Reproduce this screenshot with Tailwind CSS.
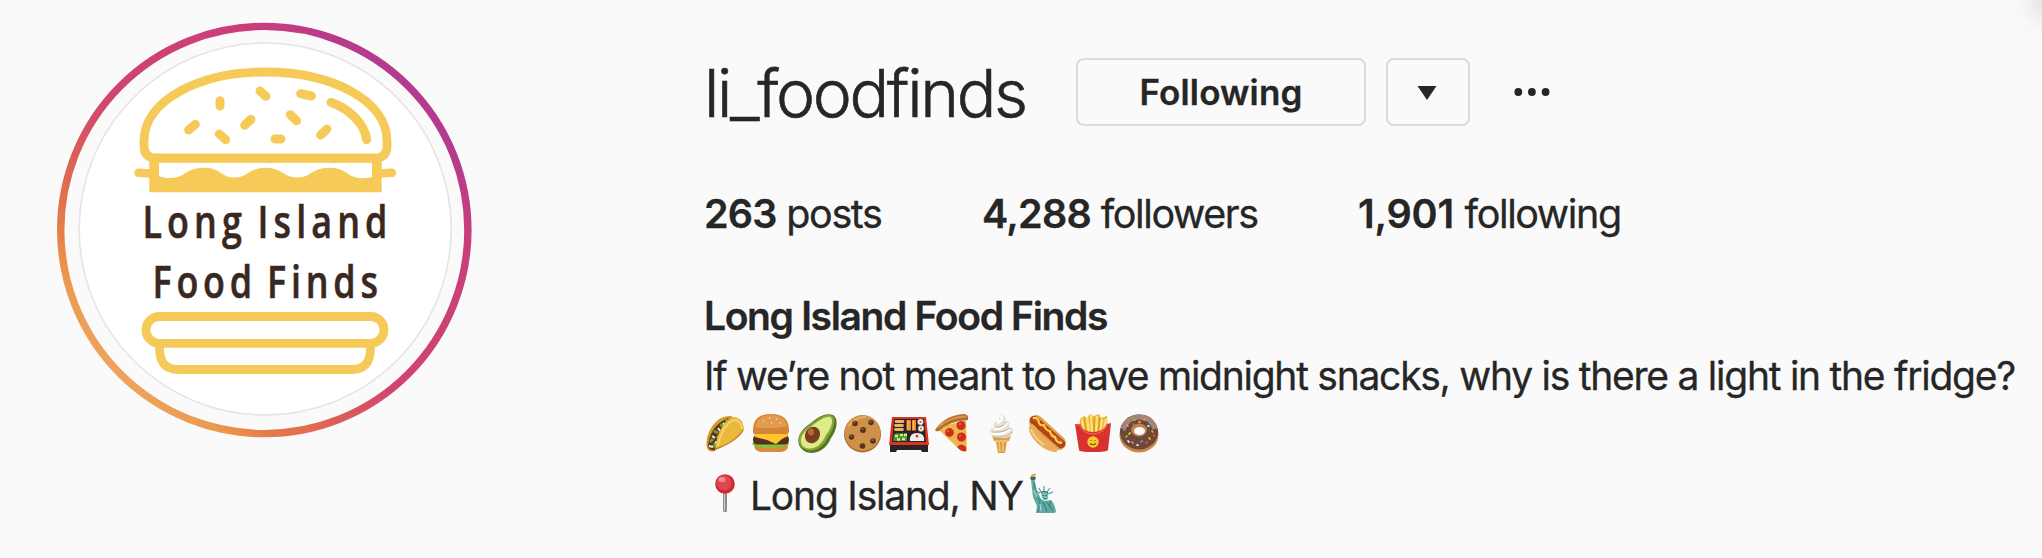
<!DOCTYPE html>
<html lang="en">
<head>
<meta charset="utf-8">
<title>li_foodfinds</title>
<script src="https://cdn.jsdelivr.net/npm/@tailwindcss/browser@4"></script>
</head>
<body class="bg-[#fafafa] overflow-hidden">
<main class="relative flex w-[2042px] h-[558px] overflow-hidden bg-[#fafafa] text-[#262626] font-['Inter',sans-serif]">
  <div class="absolute right-0 top-0 w-[34px] h-[50px] bg-[radial-gradient(farthest-side_at_top_right,#e4e4e4_0%,#eeeeee_30%,#f7f7f7_60%,#fafafa_95%)]"></div>

  <div class="w-[704px] shrink-0 pl-[50px] pt-[15px]">
    <svg class="block w-[430px] h-[430px]" viewBox="50 15 430 430" fill="none">
      <defs>
        <linearGradient id="ring" gradientUnits="userSpaceOnUse" x1="118" y1="376" x2="410" y2="84">
          <stop offset="0" stop-color="#eea35d"/><stop offset=".08" stop-color="#ec9850"/><stop offset=".15" stop-color="#e67e47"/><stop offset=".3" stop-color="#da5f57"/><stop offset=".45" stop-color="#d0456e"/><stop offset=".84" stop-color="#c93e7b"/><stop offset=".96" stop-color="#b53b8d"/><stop offset="1" stop-color="#b33a8f"/>
        </linearGradient>
      </defs>
      <circle cx="264.3" cy="230" r="203.6" stroke="url(#ring)" stroke-width="7.4"/>
      <circle cx="265.2" cy="229" r="186" fill="#fff" stroke="#e4e4e4" stroke-width="1.6"/>
      <g stroke="#f5ca58" stroke-width="8.8" stroke-linecap="round" stroke-linejoin="round">
        <path d="M153 158Q144 156 144 146V141C144 100 200 72 265.5 72S387 100 387 141V146Q387 156 378 158Z"/>
        <path d="M138.500 172.800L153 173.500M392 172.800L378 173.500" stroke-width="8.500"/>
        <rect x="146" y="316.500" width="238" height="26.800" rx="13.400"/>
        <path d="M159.500 344V348Q159.500 369.500 178 369.500H352Q370.500 369.500 370.500 348V344"/>
        <g transform="translate(120 50) scale(.33333)" stroke-width="27">
          <path d="M300 152V168M420 123L438 139M542 131L574 138M511 194L530 212M393 208L374 226M226 223L206 240M298 252L317 269M465 267H483M621 237L602 255M633 157C690 178 734 222 740 269"/>
        </g>
      </g>
      <path fill="#f5ca58" fill-rule="evenodd" d="M149.300 158H381.700V192.300H149.300ZM159 162.800V176C165 179 178 179 184 174C195 166 212 166 221 173C229 179 240 179 248 173C258 166 273 166 283 173C292 179 303 179 311 173C321 166 338 166 347 173C354 179 366 179 372 177V162.800Z"/>
      <g fill="#38281f" stroke="#38281f" stroke-width=".6" font-family="'Open Sans',sans-serif" font-weight="600" font-size="46" word-spacing="-5">
        <text transform="translate(142.500 238) scale(.78 1)" textLength="314">Long Island</text>
        <text transform="translate(152.500 298) scale(.78 1)" textLength="289">Food Finds</text>
      </g>
    </svg>
  </div>

  <div class="flex flex-col pt-[58px] whitespace-nowrap">
    <header class="flex h-[68px] items-start">
      <h1 class="w-[372px] shrink-0 font-light text-[66px] leading-[71px] tracking-[-2.38px] [-webkit-text-stroke:0.6px_#262626]">li_foodfinds</h1>
      <button class="w-[290px] h-[68px] shrink-0 rounded-[8px] border-2 border-[#dbdbdb] pb-[1px] font-semibold text-[35px] leading-[60px] tracking-[0.15px] [-webkit-text-stroke:0.3px_#262626]">Following</button>
      <button class="ml-5 flex w-[84px] h-[68px] items-center justify-center rounded-[8px] border-2 border-[#dbdbdb]">
        <svg class="w-[20px] h-[14px] mt-[2px] mr-[2px]" viewBox="0 0 20 14"><path d="M.5 0H19.500L10 14Z" fill="#262626"/></svg>
      </button>
      <svg class="ml-[44px] mt-[28px] w-[36px] h-[12px]" viewBox="0 0 36 12" fill="#262626"><circle cx="4.300" cy="6" r="3.900"/><circle cx="17.900" cy="6" r="3.900"/><circle cx="31.600" cy="6" r="3.900"/></svg>
    </header>

    <ul class="mt-[60px] flex h-[56px] text-[39.5px] leading-[56px] tracking-[-1.4px] [-webkit-text-stroke:0.3px_#262626]">
      <li class="w-[278px]"><span class="font-semibold tracking-[-0.8px]">263</span> posts</li>
      <li class="w-[376px]"><span class="font-semibold tracking-[-0.75px]">4,288</span> followers</li>
      <li><span class="mr-[1px] font-semibold tracking-[-0.2px]">1,901</span> following</li>
    </ul>

    <section class="mt-[44px] text-[39px] [-webkit-text-stroke:0.3px_#262626]">
      <h2 class="font-semibold h-[60px] leading-[60px] tracking-[-1.35px]">Long Island Food Finds</h2>
      <p class="h-[60px] leading-[60px] tracking-[-1.26px]">If we’re not meant to have midnight snacks, why is there a light in the fridge?</p>
      <div class="flex h-[54px] items-center gap-[6.1px] pl-[0.5px]">
        <!-- taco -->
        <svg class="size-10 shrink-0" viewBox="0 0 40 40">
          <path d="M2 35C-1 22 10 3 24 3C30 3 30 8 28 12L10 38Q4 40 2 35Z" fill="#d89a2b"/>
          <path d="M3 33Q5 13 23 5L27 9L11 37Q4 38 3 33Z" fill="#5b3520"/>
          <path d="M5 29l3-3M9 18l4 2M8 34l3-4M15 12l5 1M12 25l3-3M20 7l4 1" stroke="#67a331" stroke-width="3"/>
          <path d="M4 33l4 1M7 23l3 2M13 15l2 3M10 29l3 1M18 10l2 2" stroke="#f6edd5" stroke-width="2"/>
          <path d="M10 37C11 22 19 5 30 4Q38 5 39 16Q38 23 10 37Z" fill="#e9b83d"/>
          <path d="M13 33C15 20 22 8 31 7Q36 9 37 16" fill="none" stroke="#f7d266" stroke-width="2"/>
          <path d="M11 36Q32 28 38 17" fill="none" stroke="#c18323" stroke-width="1.500"/>
        </svg>
        <!-- burger -->
        <svg class="size-10 shrink-0" viewBox="0 0 40 40">
          <path d="M3 31H37Q38 39 29 39H11Q3 39 3 31Z" fill="#d98b38"/>
          <path d="M2 29q-2 3 2 4q3 2 7 1q4 2 7 0q5 2 9 0q3 1 7-1q6-1 3-5Z" fill="#7cc43c"/>
          <rect x="2" y="22" width="36" height="9.500" rx="4.500" fill="#56301d"/>
          <path d="M3 20H37L37 23L31 26L25 31L16 27L4 24Z" fill="#ffc62d"/>
          <path d="M2 19Q1 1 20 1T38 19Q37 22 33 21H7Q2 22 2 19Z" fill="#d58539"/>
          <path d="M4 14Q7 2 20 2Q33 2 36 13Q20 17 4 14Z" fill="#e39b50"/>
          <path d="M12 8h1M18 5h1M25 6h1M29 10h1M20 10h1" stroke="#fae0ae" stroke-width="1.300"/>
        </svg>
        <!-- avocado -->
        <svg class="size-10 shrink-0" viewBox="0 0 40 40">
          <path d="M2 32C-1 23 6 15 14 10C20 5 28-1 36 2C42 6 40 17 34 25C30 35 22 40 14 40Q5 39 2 32Z" fill="#547622"/>
          <path d="M2 30C0 22 7 15 14 11C21 6 28 0 35 2.500C40 6 37 16 31 24C27 33 20 38 12 37.500Q4 36 2 30Z" fill="#87a537"/>
          <path d="M4 29C3 22 9 17 16 12C22 8 28 3 33.500 4C37 7 34 16 29 22C25 31 19 36 12 35.500Q5 35 4 29Z" fill="#ddeb89"/>
          <ellipse cx="15.500" cy="22" rx="7.300" ry="8.500" transform="rotate(28 15.500 22)" fill="#7c3d1d"/>
          <ellipse cx="14" cy="19" rx="3" ry="3.500" fill="#b7673b"/>
        </svg>
        <!-- cookie -->
        <svg class="size-10 shrink-0" viewBox="0 0 40 40">
          <circle cx="19.500" cy="21" r="18.500" fill="#a8682e"/>
          <circle cx="19.500" cy="20" r="17.900" fill="#cf9149"/>
          <path d="M5 14Q12 3 23 4" stroke="#e1ad67" stroke-width="2" fill="none"/>
          <g fill="#58311d"><circle cx="12" cy="10.500" r="2.800"/><circle cx="28" cy="9.500" r="2.700"/><circle cx="20" cy="17" r="2.900"/><circle cx="8.500" cy="24" r="2.700"/><circle cx="30" cy="28" r="2.800"/><circle cx="19.500" cy="33" r="2.800"/></g>
          <g fill="#95664d"><circle cx="11.500" cy="9.500" r="1"/><circle cx="27.500" cy="8.700" r="1"/><circle cx="19.500" cy="16" r="1"/><circle cx="8" cy="23" r="1"/><circle cx="29.500" cy="27" r="1"/></g>
        </svg>
        <!-- bento -->
        <svg class="size-10 shrink-0" viewBox="0 0 40 40">
          <path d="M1 31H39V39H33L32 37H8L7 39H1Z" fill="#262425"/>
          <path d="M3 4H37L40 32H0Z" fill="#dc3124"/>
          <path d="M5 6H35L37 29H3Z" fill="#292326"/>
          <path d="M7 8.500h7M6.500 12.500h7M6.500 16.500h7" stroke="#ecb25c" stroke-width="2.800" stroke-linecap="round"/>
          <path d="M17.500 7h4.500v10.500h-4.500zM23 7h4v10.500h-4z" fill="#f28d2d"/>
          <path d="M19 8v9M24.500 8v9" stroke="#ffc271" stroke-width="1"/>
          <g fill="#fff" stroke="#888" stroke-width=".6"><circle cx="31.500" cy="9" r="2.900"/><circle cx="32" cy="15.500" r="2.900"/></g>
          <path d="M30.500 9h2M31 15.500h2" stroke="#e65d3d" stroke-width="2"/>
          <path d="M5 21l4-1 3 1 6-1v8H4Z" fill="#3e9135"/>
          <path d="M6 23h3M11 22h3M8 26.500h3M13 26h3M15 22h3" stroke="#dfe977" stroke-width="2.600"/>
          <path d="M21 28Q20 20 28 20T35 28Z" fill="#f1eef0"/><circle cx="28" cy="23" r="1.500" fill="#dc3c3c"/>
        </svg>
        <!-- pizza -->
        <svg class="size-10 shrink-0" viewBox="0 0 40 40">
          <path d="M2 15L31 7L32 38Q28 40 25 37Z" fill="#f0b44c"/>
          <path d="M0 17Q10 2 29 1Q34 1 33 7Q14 8 4 18Q1 19 0 17Z" fill="#b56e2a"/>
          <path d="M3 14Q14 4 31 3.500" stroke="#d79744" stroke-width="2" fill="none"/>
          <g fill="#d02c20"><circle cx="14.500" cy="19.500" r="4.400"/><circle cx="26" cy="12.500" r="4.500"/><circle cx="26.500" cy="24" r="4.500"/><path d="M22 34Q26 29 31 34L31 38Q26 39 22 34"/></g>
          <path d="M12 18h2M24 11h2M24 23h2" stroke="#ea6547" stroke-width="1.500"/>
        </svg>
        <!-- ice cream -->
        <svg class="size-10 shrink-0" viewBox="0 0 40 40">
          <path d="M11 23H30L28 28H26L24 40H17L15 28H13Z" fill="#d99d46"/>
          <path d="M12 24h17M14 28h13M18 28l1 11M22 28v11" stroke="#f0c576" stroke-width="1.500"/>
          <path d="M9 20Q8 15 13 15Q11 9 17 8Q20 6 17 1Q25 1 25 8Q30 9 28 14Q34 15 32 20Q27 26 20 25Q11 25 9 20Z" fill="#e9e0d6"/>
          <path d="M18 2Q25 6 16 10M13 16Q22 17 26 10M10 20Q22 23 29 16" stroke="#fff" stroke-width="2.300" fill="none"/>
          <path d="M14 14Q22 15 25 9M11 19Q23 20 29 15M13 24Q26 25 31 19" stroke="#b9aa9a" stroke-width=".9" fill="none"/>
        </svg>
        <!-- hot dog -->
        <svg class="size-10 shrink-0" viewBox="0 0 40 40">
          <path d="M9 9L32 30" stroke="#e0a351" stroke-width="14" stroke-linecap="round"/>
          <path d="M7 7L34 31" stroke="#b3431e" stroke-width="8.500" stroke-linecap="round"/>
          <path d="M6 5L35 29" stroke="#d2623a" stroke-width="2" stroke-linecap="round"/>
          <path d="M2 14Q1 21 11 31Q22 40 30 39Q31 34 23 29Q13 22 8 13Q4 9 2 14Z" fill="#e8ae5b"/>
          <path d="M4 16Q7 25 17 32" stroke="#f7d08a" stroke-width="2" fill="none"/>
          <path d="M6 5Q12 4 12 10Q13 13 17 12Q19 18 23 18Q24 24 28 24Q29 30 35 30" stroke="#ffd52e" stroke-width="2" fill="none"/>
        </svg>
        <!-- fries -->
        <svg class="size-10 shrink-0" viewBox="0 0 40 40">
          <path d="M6 22L7 6L11 3L14 5L17 1L21 3L26 1L28 5L34 3L35 21Z" fill="#eeb633"/>
          <path d="M9 6l3 15M14 4l2 17M18 2l1 18M24 3l-1 18M29 6l-2 15M33 6l-3 16" stroke="#ffe27d" stroke-width="2.200"/>
          <path d="M11 6l2 13M21 5v15M27 5l-2 14" stroke="#c98725" stroke-width=".8"/>
          <path d="M2 11L7 11Q10 19 20 19T34 11L38 10L35 37Q34 39 20 39T6 37Z" fill="#d93030"/>
          <path d="M3 12L7 12Q10 21 20 21T34 12" stroke="#ef5b50" stroke-width="1.300" fill="none"/>
          <circle cx="20" cy="29" r="5.700" fill="#ffc92f"/>
          <path d="M17.500 27.500h1M21.500 27.500h1M17 30.500q3 2.500 6 0" stroke="#7a4b13" stroke-width="1.200" fill="none"/>
        </svg>
        <!-- doughnut -->
        <svg class="size-10 shrink-0" viewBox="0 0 40 40">
          <ellipse cx="20" cy="22" rx="19.500" ry="17.500" fill="#c88a48"/>
          <ellipse cx="20" cy="19" rx="19" ry="17.500" fill="#6d4836"/>
          <path d="M4 16Q9 4 20 4Q33 4 36 16" stroke="#a58576" stroke-width="5" fill="none"/>
          <ellipse cx="20" cy="17" rx="8" ry="6.500" fill="#bd854d"/><ellipse cx="20.500" cy="18" rx="5.500" ry="4" fill="#fafafa"/>
          <g stroke-width="1.700" stroke-linecap="round"><path d="M8 12l1 1M25 7l1-1M13 29l1 1" stroke="#f384b5"/><path d="M15 7h1M33 18l1 1M7 24l1-1" stroke="#7cd253"/><path d="M31 10l1 1M22 29l1-1M5 17h1" stroke="#4fa9e8"/><path d="M11 20l-1 1M30 25l1 1M20 9h1" stroke="#ffd33d"/><path d="M27 30l1-1M35 22v1M14 11l1 1" stroke="#f15443"/><path d="M18 32h1M9 28l1 1M29 13h1" stroke="#fff"/></g>
        </svg>
      </div>
      <div class="mt-[6px] flex h-[60px] items-center leading-[60px]">
        <!-- round pushpin -->
        <svg class="mr-[6px] mt-[-7px] size-10 shrink-0" viewBox="0 0 40 40">
          <rect x="19" y="19" width="4" height="20" rx="1.500" fill="#8e8b8d"/><path d="M20.500 20V38" stroke="#cfcdce" stroke-width="1"/>
          <circle cx="21" cy="11" r="9.800" fill="#cf2b36"/><circle cx="20" cy="9.800" r="7.500" fill="#e04650"/><ellipse cx="18" cy="6.500" rx="3.500" ry="2.600" fill="#f28f91"/>
        </svg>
        <p class="tracking-[-1.2px]">Long Island, NY</p>
        <!-- statue of liberty -->
        <svg class="ml-[4px] mt-[-6px] size-10 shrink-0" viewBox="0 0 40 40">
          <path d="M4 2L9 0L8 4L4 4Z" fill="#e9a04a"/>
          <path d="M3 4H9L8 7H4Z" fill="#38646a"/>
          <path d="M4 7L7.500 7L10 18L14 26L18 28L24 27L27 31L29 38L28 40H9L10 33L6 24Z" fill="#5fa9a0"/>
          <path d="M14 19Q18 16 21 20L21 26Q18 29 15 25Z" fill="#74bdb2"/>
          <path d="M13 20L9 18M14 19L12 15M17 18L17 13M20 19L23 15M21 21L26 19" stroke="#4f958d" stroke-width="1.100"/>
          <path d="M14 20Q17 17 21 20M15.500 22.500h1.500M18.500 22.500h1.500M17 25.500h2" stroke="#2d6965" stroke-width="1.200" fill="none"/>
          <path d="M7 9L9 22L13 28L11 39M16 29L20 39M20 29L26 38M24 28L22 34" stroke="#3d8780" stroke-width="1.200" fill="none"/>
          <path d="M7 17L10 24M13 31L14 38" stroke="#a5d9cf" stroke-width="1.200"/>
        </svg>
      </div>
    </section>
  </div>
</main>
</body>
</html>
